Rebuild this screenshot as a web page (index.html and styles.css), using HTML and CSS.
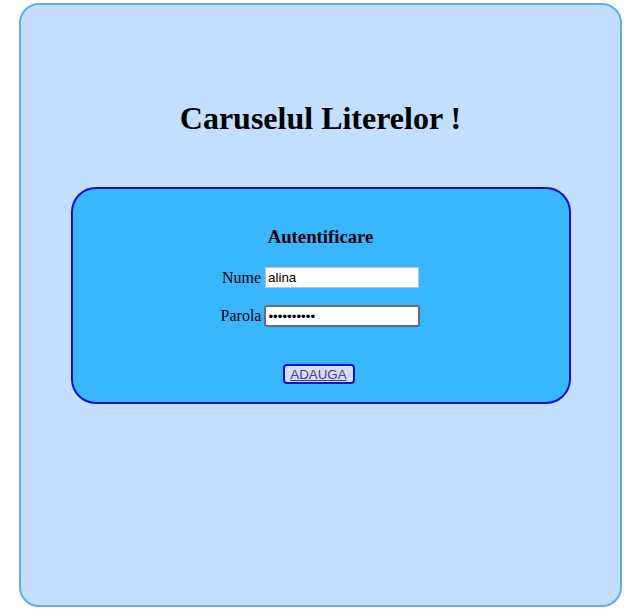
FILE: index.html
```html
<!DOCTYPE html>
<html>
<head>
<meta charset="utf-8">
<title>Caruselul Literelor</title>
<link rel="stylesheet" href="styles.css">
</head>
<body>
<div class="page">
  <h1 class="title">Caruselul Literelor !</h1>
  <form class="login">
    <h3 class="login-title">Autentificare</h3>
    <div class="row row-name">
      <label class="label" for="nume">Nume</label>
      <input class="field field-name" id="nume" type="text" value="alina">
    </div>
    <div class="row row-pass">
      <label class="label" for="parola">Parola</label>
      <input class="field field-pass" id="parola" type="password" value="alinaalina">
    </div>
    <div class="actions">
      <button class="btn" type="button"><a class="btn-link" href="#">ADAUGA</a></button>
    </div>
  </form>
</div>
</body>
</html>
```

FILE: styles.css
```css
html, body {
  margin: 0;
  padding: 0;
  background: #ffffff;
}
body {
  padding: 3px 18px 6px 19px;
  font-family: "Liberation Serif", "Times New Roman", serif;
  color: #000;
}
.page {
  box-sizing: border-box;
  width: 603px;
  height: 604px;
  background: #c2dfff;
  border: 2px solid #5cb3e3;
  border-radius: 20px;
  display: flex;
  flex-direction: column;
  align-items: center;
}
.title {
  margin: 95px 0 0 0;
  font-size: 32px;
  line-height: 37px;
  font-weight: bold;
  text-align: center;
}
.login {
  box-sizing: border-box;
  margin-top: 50px;
  width: 500px;
  height: 217px;
  background: #38b6ff;
  border: 2px solid #0a10d0;
  border-radius: 25px;
  display: flex;
  flex-direction: column;
  align-items: center;
  padding-top: 37px;
}
.login-title {
  margin: 0;
  font-size: 18.72px;
  line-height: 22px;
  font-weight: bold;
}
.row {
  display: flex;
  align-items: center;
  gap: 4px;
  font-size: 16px;
}
.row-name {
  margin-top: 19px;
}
.row-pass {
  margin-top: 17px;
  gap: 3px;
}
.label {
  font-size: 16px;
}
.field {
  box-sizing: border-box;
  font-family: "Liberation Sans", Arial, sans-serif;
  font-size: 13.33px;
  background: #fff;
  color: #000;
  margin: 0;
  outline: none;
}
.field-name {
  width: 154px;
  height: 21px;
  border: 1px solid #b9c3cc;
  padding: 1px 2px;
}
.field-pass {
  width: 156px;
  height: 22px;
  border: 2px solid #5b6f80;
  border-radius: 3px;
  padding: 1px 2px;
}
.actions {
  margin-top: 37px;
  padding-right: 4px;
}
.btn {
  box-sizing: border-box;
  width: 72px;
  height: 20px;
  padding: 0;
  background: #d7dcfb;
  border: 2px solid #1414c8;
  border-radius: 4px;
  display: flex;
  align-items: center;
  justify-content: center;
  cursor: pointer;
}
.btn-link {
  font-family: "Liberation Sans", Arial, sans-serif;
  font-size: 13.33px;
  color: #4a3b9c;
  text-decoration: underline;
}
```
